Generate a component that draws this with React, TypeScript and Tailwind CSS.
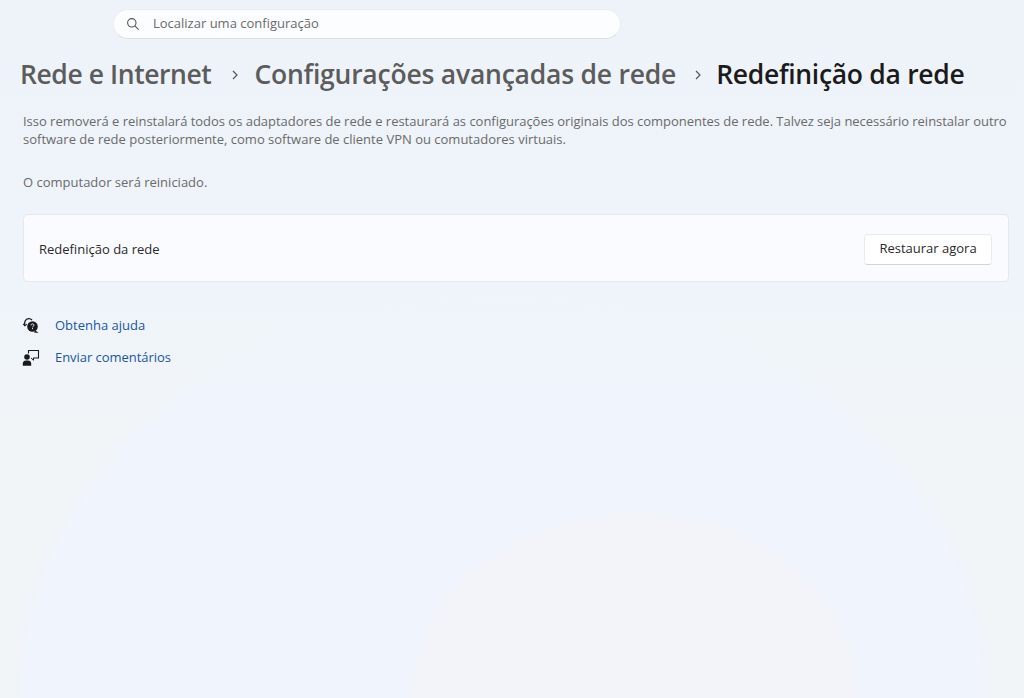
import React from "react";

const font = { fontFamily: '"Open Sans", "Noto Sans", sans-serif' };

function HelpIcon() {
  return (
    <svg width="18" height="18" viewBox="0 0 18 18" fill="none">
      <path d="M2.800 8.500C2 5 3.500 2 6.500 1.700c1.500-.1 2.600.3 3.500 1.300" stroke="#1a1a1a" strokeWidth="1.200" />
      <path d="M1.200 6.800l1.700 2 1.800-1.600" stroke="#1a1a1a" strokeWidth="1.100" />
      <circle cx="10.500" cy="9.500" r="5.300" fill="#1a1a1a" />
      <path d="M13.500 13.500l3 2.500-4.500-.6z" fill="#1a1a1a" />
      <path d="M9 8.300c0-.9.700-1.400 1.500-1.400s1.500.5 1.500 1.300c0 1.100-1.500 1-1.500 2.100" stroke="#eef3f9" strokeWidth="1" />
      <rect x="10" y="11.100" width="1" height="1" fill="#eef3f9" />
    </svg>
  );
}

function FeedbackIcon() {
  return (
    <svg width="18" height="18" viewBox="0 0 18 18" fill="none">
      <path d="M6.500 4.500V1.500h10v7.500H11" stroke="#1a1a1a" strokeWidth="1.100" />
      <path d="M9 9l2.500 2.200V9" stroke="#1a1a1a" strokeWidth="1" />
      <circle cx="5" cy="8" r="2.800" fill="#1a1a1a" />
      <path d="M0.800 16.800v-2.300c0-2 1.500-3 3-3h2.400c1.500 0 3 1 3 3v2.300z" fill="#1a1a1a" />
    </svg>
  );
}

function Chevron() {
  return (
    <svg width="8" height="10" viewBox="0 0 8 10" fill="none">
      <path d="M2 1l4 4-4 4" stroke="#555" strokeWidth="1.200" />
    </svg>
  );
}

export default function App() {
  return (
    <div
      style={font}
      className="w-[1024px] h-[698px] overflow-hidden bg-[#f1f5f8] bg-[radial-gradient(ellipse_230px_190px_at_62%_100%,#f2f4f9_0%,#f2f4f9_94%,rgba(242,244,249,0)_100%),linear-gradient(180deg,#eef3f9_0%,rgba(239,244,250,0.9)_45%,rgba(239,244,250,0)_62%),radial-gradient(ellipse_495px_415px_at_49%_100%,#f0f4fc_0%,#f0f4fc_96%,rgba(240,244,252,0)_100%)] flex flex-col"
    >
      <div className="pt-[9px] pl-[113px]">
        <div className="w-[508px] h-[30px] rounded-full bg-[#fcfdfe] border border-[#e9edf2] border-b-[#d9dee4] flex items-center pl-[12px]">
          <svg width="14" height="14" viewBox="0 0 14 14" fill="none">
            <circle cx="5.800" cy="5.800" r="4.200" stroke="#555" strokeWidth="1.100" />
            <path d="M8.900 8.900l3.700 3.700" stroke="#555" strokeWidth="1.100" />
          </svg>
          <span className="ml-[13px] text-[13px] text-[#6b6b6b]">Localizar uma configuração</span>
        </div>
      </div>

      <div className="mt-[15px] pl-[20px] flex items-center h-[42px] text-[26.500px] font-semibold whitespace-nowrap text-[#5c5c5c]">
        <span className="tracking-[-0.42px]">Rede e Internet</span>
        <span className="ml-[20px] mr-[15px] flex"><Chevron /></span>
        <span className="tracking-[-0.22px]">Configurações avançadas de rede</span>
        <span className="ml-[18px] mr-[14px] flex"><Chevron /></span>
        <span className="text-[#1b1b1b] tracking-[-0.3px]">Redefinição da rede</span>
      </div>

      <div className="mt-[16px] pl-[23px] text-[13px] leading-[18px] text-[#6a6a6a]">
        <p className="whitespace-nowrap tracking-[-0.025px]">Isso removerá e reinstalará todos os adaptadores de rede e restaurará as configurações originais dos componentes de rede. Talvez seja necessário reinstalar outro</p>
        <p className="whitespace-nowrap">software de rede posteriormente, como software de cliente VPN ou comutadores virtuais.</p>
        <p className="mt-[25px]">O computador será reiniciado.</p>
      </div>

      <div className="mt-[23px] ml-[23px] w-[986px] h-[68px] rounded-[5px] bg-[#fafbfe] border border-[#e5e8ec] flex items-center justify-between pl-[15px] pr-[16px]">
        <span className="pt-[3px] text-[13px] text-[#2a2a2a]">Redefinição da rede</span>
        <button className="mt-[2px] w-[128px] h-[31px] rounded-[4px] bg-white border border-[#ececec] border-b-[#d4d4d4] text-[13px] text-[#2a2a2a]">
          Restaurar agora
        </button>
      </div>

      <div className="mt-[35px] pl-[22px] flex flex-col gap-[15px] text-[13px] text-[#1a55a5]">
        <a className="flex items-center h-[17px] gap-[15px]"><HelpIcon /><span>Obtenha ajuda</span></a>
        <a className="flex items-center h-[17px] gap-[15px]"><FeedbackIcon /><span className="tracking-[-0.05px]">Enviar comentários</span></a>
      </div>
    </div>
  );
}
